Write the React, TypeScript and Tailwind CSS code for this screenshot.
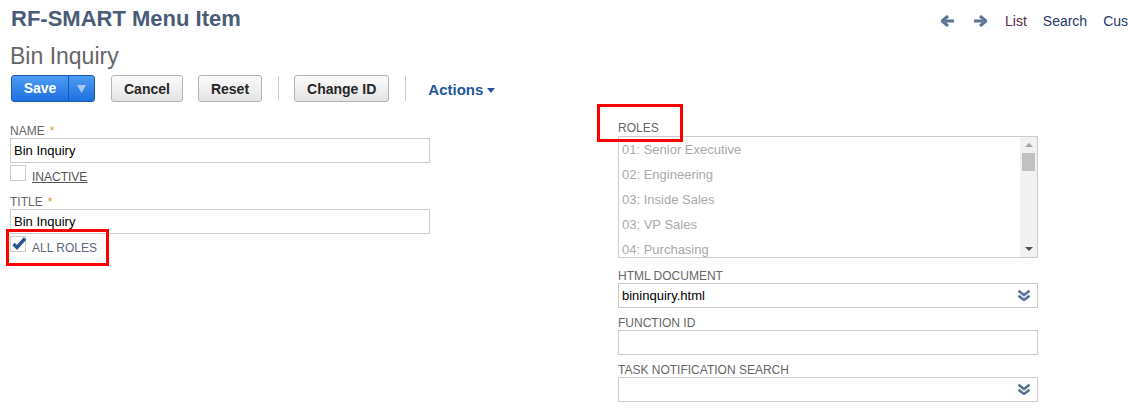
import { type ReactNode } from 'react'

const roles = ['01: Senior Executive', '02: Engineering', '03: Inside Sales', '03: VP Sales', '04: Purchasing']

function Label({ text, required }: { text: string; required?: boolean }) {
  return (
    <div className="h-[14px] text-[12px] leading-[14px] uppercase text-[#666] whitespace-nowrap">
      {text}
      {required && <span className="ml-[5px] text-[#d29a37]">*</span>}
    </div>
  )
}

function TextBox({ value }: { value?: string }) {
  return (
    <div className="h-[25px] border border-[#ccc] bg-white flex items-center pl-[3px] text-[13px] text-black">
      {value}
    </div>
  )
}

function DoubleChevron() {
  return (
    <svg width="12" height="11" viewBox="0 0 12 11" fill="none" stroke="#5b7396" strokeWidth="2.6" strokeLinecap="square">
      <path d="M1.5 1.5 L6 5 L10.5 1.5" />
      <path d="M1.5 6.5 L6 10 L10.5 6.5" />
    </svg>
  )
}

function SelectBox({ value }: { value?: string }) {
  return (
    <div className="h-[25px] border border-[#ccc] bg-white flex items-center pl-[3px] pr-[7px] text-[13px] text-black">
      <span className="flex-1">{value}</span>
      <DoubleChevron />
    </div>
  )
}

function Checkbox({ checked }: { checked?: boolean }) {
  return (
    <div className="relative w-[16px] h-[16px] border border-[#ccc] bg-white shrink-0">
      {checked && (
        <svg className="absolute left-[1px] top-[0px]" width="15" height="14" viewBox="0 0 15 14">
          <path d="M1.5 7 L5 10.5 L13 1.5" fill="none" stroke="#2a5693" strokeWidth="3.4" />
        </svg>
      )}
    </div>
  )
}

function GrayButton({ children }: { children: ReactNode }) {
  return (
    <button className="h-[27px] px-[12px] rounded-[3px] border border-[#b3b3b3] bg-gradient-to-b from-[#fcfcfc] to-[#e4e4e4] text-[14px] font-bold text-[#262626] leading-none">
      {children}
    </button>
  )
}

function Arrow({ dir }: { dir: 'left' | 'right' }) {
  return (
    <svg width="14" height="12" viewBox="0 0 14 12" className={dir === 'right' ? '' : 'rotate-180'}>
      <path d="M1 6 H10" stroke="#5b7396" strokeWidth="3" />
      <path d="M7 1 L13 6 L7 11" fill="none" stroke="#5b7396" strokeWidth="3" strokeLinejoin="round" />
    </svg>
  )
}

function RedMark({ className }: { className: string }) {
  return <div className={`absolute border-[3px] border-[#f00] pointer-events-none ${className}`} />
}

export default function App() {
  return (
    <div className="relative w-[1128px] h-[408px] overflow-hidden bg-white font-['Liberation_Sans',Arial,sans-serif]">
      {/* Header */}
      <div className="mt-[6px] h-[26px] grid grid-cols-[941px_1fr] items-start">
        <h1 className="pl-[11px] text-[22px] leading-[26px] font-bold text-[#4b5c77]">RF-SMART Menu Item</h1>
        <div className="flex items-center whitespace-nowrap text-[14px] leading-[26px] h-[26px] pt-[3px]">
          <Arrow dir="left" />
          <span className="ml-[18px] flex">
            <Arrow dir="right" />
          </span>
          <span className="ml-[18px] text-[#5b2a4e]">List</span>
          <span className="ml-[16px] text-[#1f3a63]">Search</span>
          <span className="ml-[16px] text-[#1f3a63]">Cus</span>
        </div>
      </div>
      <div className="mt-[10px] pl-[10px] text-[23px] leading-[28px] text-[#666]">Bin Inquiry</div>

      {/* Toolbar */}
      <div className="mt-[5px] pl-[11px] flex items-center h-[27px]">
        <div className="flex h-[27px] w-[84px] rounded-[3px] border border-[#1a5bb2] bg-gradient-to-b from-[#4d9bf3] to-[#1c71df]">
          <div className="w-[57px] flex items-center justify-center text-[14px] font-bold text-white border-r border-[#1558ad]">
            Save
          </div>
          <div className="flex-1 flex items-center justify-center">
            <svg width="9" height="8" viewBox="0 0 9 8">
              <path d="M0 0 H9 L4.5 8 Z" fill="#a5c8f0" />
            </svg>
          </div>
        </div>
        <div className="ml-[16px]">
          <GrayButton>Cancel</GrayButton>
        </div>
        <div className="ml-[15px]">
          <GrayButton>Reset</GrayButton>
        </div>
        <div className="ml-[16px] w-px h-[25px] bg-[#ccc]" />
        <div className="ml-[15px]">
          <GrayButton>Change ID</GrayButton>
        </div>
        <div className="ml-[16px] w-px h-[25px] bg-[#ccc]" />
        <div className="ml-[22px] flex items-center text-[15px] font-bold text-[#24579a] pt-[3px]">
          Actions
          <svg className="ml-[4px]" width="8" height="5" viewBox="0 0 8 5">
            <path d="M0 0 H8 L4 5 Z" fill="#24579a" />
          </svg>
        </div>
      </div>

      {/* Form */}
      <div className="flex items-start">
        <div className="ml-[10px] w-[420px] pt-[22px]">
          <Label text="Name" required />
          <TextBox value="Bin Inquiry" />
          <div className="mt-[2px] flex items-start">
            <Checkbox />
            <span className="ml-[6px] pt-[5px] text-[12px] leading-[14px] text-[#555] underline">INACTIVE</span>
          </div>
          <div className="mt-[11px]">
            <Label text="Title" required />
          </div>
          <TextBox value="Bin Inquiry" />
          <div className="mt-[2px] flex items-start">
            <Checkbox checked />
            <span className="ml-[6px] pt-[5px] text-[12px] leading-[14px] text-[#5e6878]">ALL ROLES</span>
          </div>
        </div>

        <div className="ml-[188px] w-[420px] pt-[19px]">
          <Label text="Roles" />
          <div className="mt-[1px] h-[122px] border border-[#ccc] flex overflow-hidden">
            <div className="flex-1 pl-[3px] text-[13px] leading-[25px] text-[#a9a9a9] overflow-hidden">
              {roles.map(r => (
                <div key={r}>{r}</div>
              ))}
            </div>
            <div className="w-[17px] bg-[#f1f1f1] flex flex-col items-center">
              <div className="h-[16px] flex items-center justify-center">
                <svg width="8" height="4" viewBox="0 0 8 4">
                  <path d="M0 4 L4 0 L8 4 Z" fill="#a3a3a3" />
                </svg>
              </div>
              <div className="w-[13px] h-[18px] bg-[#c1c1c1]" />
              <div className="flex-1" />
              <div className="h-[16px] flex items-center justify-center">
                <svg width="8" height="4" viewBox="0 0 8 4">
                  <path d="M0 0 H8 L4 4 Z" fill="#505050" />
                </svg>
              </div>
            </div>
          </div>
          <div className="mt-[11px]">
            <Label text="HTML Document" />
          </div>
          <SelectBox value="bininquiry.html" />
          <div className="mt-[8px]">
            <Label text="Function ID" />
          </div>
          <TextBox />
          <div className="mt-[8px]">
            <Label text="Task Notification Search" />
          </div>
          <SelectBox />
        </div>
      </div>

      {/* annotation boxes */}
      <RedMark className="left-[6px] top-[229px] w-[103px] h-[37px]" />
      <RedMark className="left-[597px] top-[104px] w-[86px] h-[38px]" />
    </div>
  )
}
